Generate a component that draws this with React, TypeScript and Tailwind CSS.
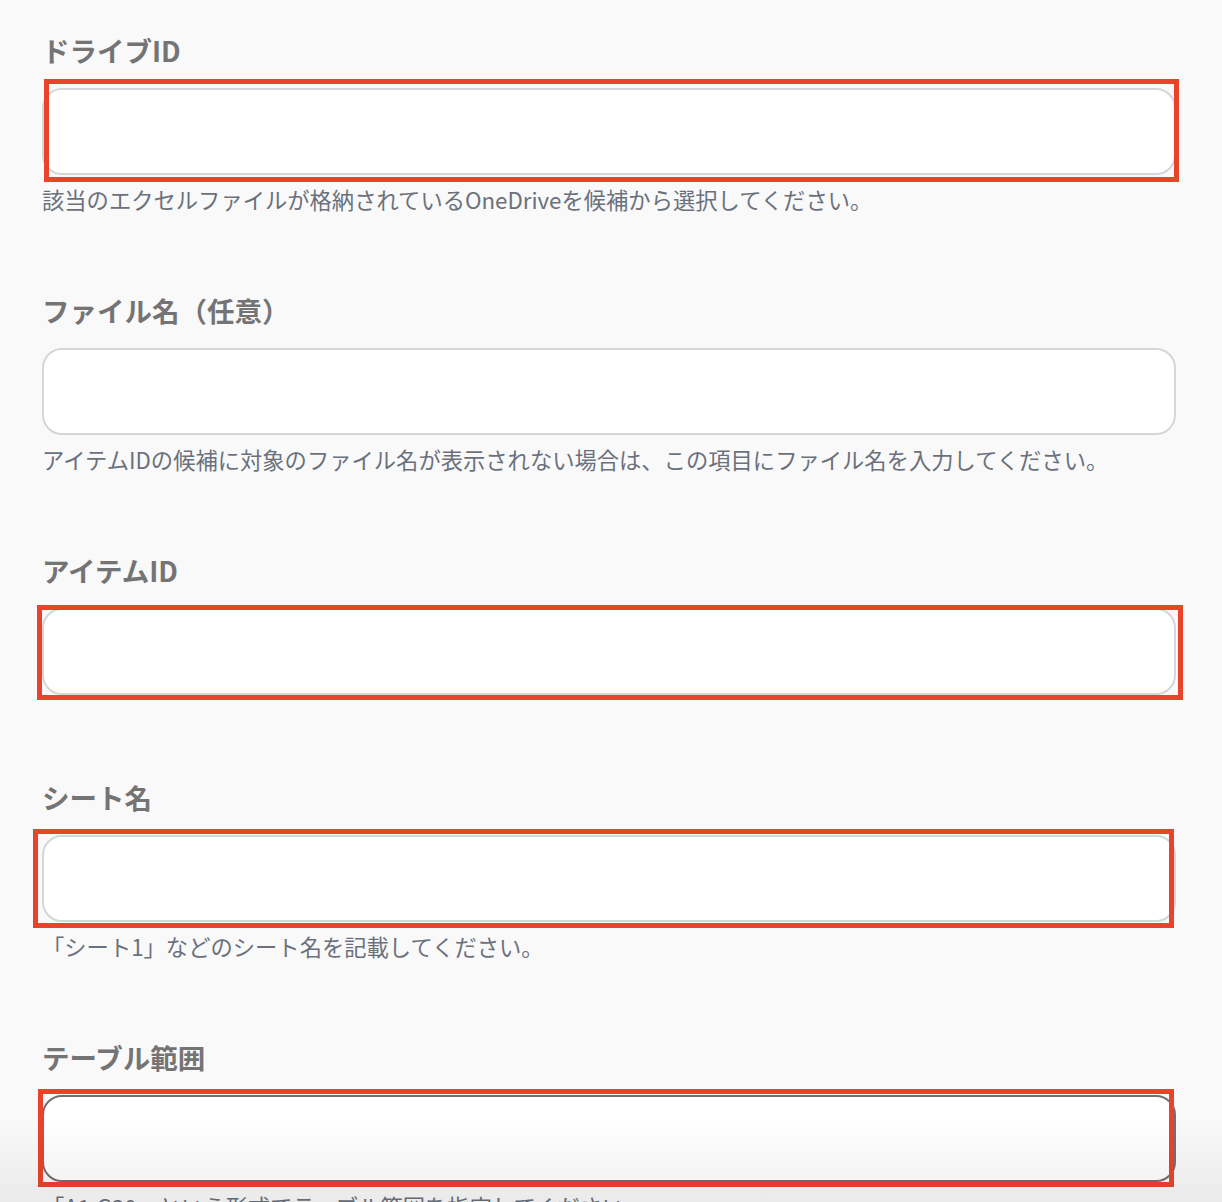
import React from 'react';

type Field = {
    label: string;
    help?: string;
    focused?: boolean;
    // red annotation frame drawn round the input
    mark?: string;
    gap: string;
};

const fields: Field[] = [
    {
        label: 'ドライブID',
        help: '該当のエクセルファイルが格納されているOneDriveを候補から選択してください。',
        mark: '-top-[9px] left-[2px] -right-[3px] -bottom-[7px]',
        gap: 'mb-[78px]',
    },
    {
        label: 'ファイル名（任意）',
        help: 'アイテムIDの候補に対象のファイル名が表示されない場合は、この項目にファイル名を入力してください。',
        gap: 'mb-[78px]',
    },
    {
        label: 'アイテムID',
        mark: '-top-[3px] -left-[5px] -right-[7px] -bottom-[5px]',
        gap: 'mb-[84px]',
    },
    {
        label: 'シート名',
        help: '「シート1」などのシート名を記載してください。',
        mark: '-top-[6px] -left-[9px] right-[2px] -bottom-[6px]',
        gap: 'mb-[78px]',
    },
    {
        label: 'テーブル範囲',
        help: '「A1:G30」という形式でテーブル範囲を指定してください。',
        focused: true,
        mark: '-top-[6px] -left-[4px] right-[2px] -bottom-[5px]',
        gap: 'mb-[78px]',
    },
];

const App = () => {
    return (
        <main
            className="relative h-[1202px] overflow-hidden bg-[#f9f9f9]"
            style={{ fontFamily: '"Noto Sans CJK JP", "Noto Sans", sans-serif' }}
        >
            <div className="pt-8 pl-[42px] pr-[46px]">
                {fields.map((field, index) => (
                    <div key={index} className={field.gap}>
                        <h4 className="text-[27.5px] leading-[36px] font-bold text-[#747474]">{field.label}</h4>
                        <div className="relative mt-5">
                            <input
                                type="text"
                                className={
                                    field.focused
                                        ? 'block w-full h-[87px] rounded-[20px] border-2 border-[#707070] bg-white outline-none'
                                        : 'block w-full h-[87px] rounded-[20px] border-2 border-[#d3d6db] bg-white outline-none'
                                }
                            />
                            {field.mark && (
                                <div className={`pointer-events-none absolute border-[5px] border-[#e9432b] ${field.mark}`}></div>
                            )}
                        </div>
                        {field.help && (
                            <p className="mt-[9px] text-[22.3px] leading-[30px] text-[#6b717c]">{field.help}</p>
                        )}
                    </div>
                ))}
            </div>
            {/* fade at the bottom edge */}
            <div className="pointer-events-none absolute inset-x-0 bottom-0 h-[80px] bg-linear-to-b from-transparent to-black/[0.06]"></div>
        </main>
    );
};

export default App;
